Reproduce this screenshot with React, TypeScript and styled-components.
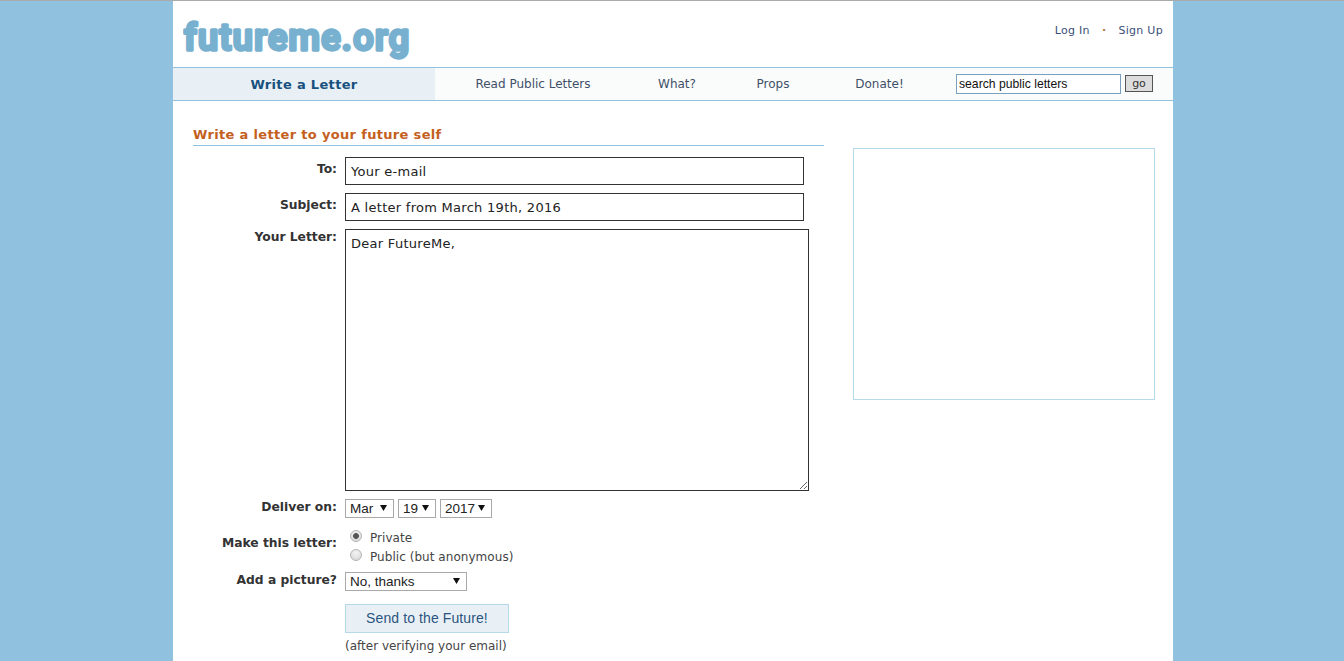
import React from "react";
import styled, { createGlobalStyle } from "styled-components";

const GlobalStyle = createGlobalStyle`
  html, body {
    margin: 0;
    padding: 0;
    height: 100%;
    overflow: hidden;
    background: #90c2df;
    font-family: "DejaVu Sans", Verdana, sans-serif;
  }
  * { box-sizing: border-box; }
`;

const arrow = `url("data:image/svg+xml,%3Csvg xmlns='http://www.w3.org/2000/svg' width='7' height='6'%3E%3Cpath d='M0 0h7L3.5 6z' fill='%23111'/%3E%3C/svg%3E")`;

const TopLine = styled.div`
  height: 1px;
  background: #aaa;
`;

const Page = styled.div`
  width: 1000px;
  height: 660px;
  margin-left: 173px;
  background: #fff;
  overflow: hidden;
`;

const Header = styled.header`
  height: 66px;
  display: flex;
  justify-content: space-between;
  padding: 0 10px;
`;

const Logo = styled.svg`
  display: block;
  width: 230px;
  height: 60px;
  font-family: Roboto, "DejaVu Sans", sans-serif;
  font-size: 36px;
  font-weight: 500;
  letter-spacing: 1.35px;
  fill: #78b1d0;
  stroke: #78b1d0;
  stroke-width: 3.4px;
  stroke-linejoin: round;
  stroke-linecap: round;
`;

const AccountLinks = styled.div`
  display: flex;
  gap: 12px;
  margin-top: 23px;
  font-size: 11px;
  line-height: 14px;
  letter-spacing: 0.3px;
  color: #3a4f78;
`;

const Dot = styled.span`
  color: #b5763a;
  font-weight: 700;
`;

const Nav = styled.nav`
  height: 34px;
  display: flex;
  align-items: center;
  border-top: 1px solid #90c2df;
  border-bottom: 1px solid #90c2df;
  background: #fafcfc;
`;

const ActiveTab = styled.a`
  width: 262px;
  height: 100%;
  display: flex;
  align-items: center;
  justify-content: center;
  background: #e8f0f6;
  color: #18507f;
  font-size: 13px;
  font-weight: 700;
  letter-spacing: 0.33px;
`;

const NavItem = styled.a<{ $width: number }>`
  width: ${(p) => p.$width}px;
  text-align: center;
  font-size: 12px;
  color: #3f5068;
`;

const SearchForm = styled.form`
  display: flex;
  align-items: center;
  gap: 4px;
  margin-left: 20px;
`;

const SearchInput = styled.input`
  width: 165px;
  height: 20px;
  padding: 0 2px;
  border: 1px solid #7a9fc0;
  border-radius: 0;
  outline: none;
  font-family: "Liberation Sans", Arial, sans-serif;
  font-size: 12.2px;
  color: #111;
`;

const GoButton = styled.button`
  width: 28px;
  height: 17px;
  margin-bottom: 1px;
  padding: 0;
  border: 1px solid #555;
  background: #ddd;
  font-family: "DejaVu Sans", sans-serif;
  font-size: 11px;
  line-height: 15px;
  color: #333;
`;

const Content = styled.div`
  display: flex;
  padding: 27px 18px 0 20px;
`;

const Main = styled.main`
  width: 631px;
`;

const Title = styled.h2`
  margin: 0 0 11px;
  height: 18px;
  border-bottom: 1px solid #90c2df;
  font-size: 13px;
  line-height: 13px;
  font-weight: 700;
  letter-spacing: 0.33px;
  color: #c4601e;
`;

const Row = styled.div<{ $gap: number }>`
  display: grid;
  grid-template-columns: 144px 1fr;
  column-gap: 8px;
  margin-bottom: ${(p) => p.$gap}px;
`;

const Label = styled.label<{ $top?: number }>`
  text-align: right;
  font-size: 12.3px;
  line-height: 16px;
  font-weight: 700;
  color: #333;
  padding-top: ${(p) => p.$top ?? 4}px;
`;

const TextField = styled.input`
  display: block;
  width: 459px;
  height: 28px;
  padding: 0 5px;
  border: 1px solid #333;
  border-radius: 0;
  outline: none;
  font-family: "DejaVu Sans", sans-serif;
  font-size: 13px;
  letter-spacing: 0.28px;
  color: #222;
`;

const LetterBox = styled.textarea`
  display: block;
  width: 464px;
  height: 262px;
  padding: 6px 5px;
  border: 1px solid #333;
  border-radius: 0;
  outline: none;
  font-family: "DejaVu Sans", sans-serif;
  font-size: 13px;
  line-height: 16px;
  letter-spacing: 0.28px;
  color: #222;
`;

const Selects = styled.div`
  display: flex;
  gap: 4px;
`;

const Select = styled.select<{ $width: number }>`
  appearance: none;
  width: ${(p) => p.$width}px;
  height: 19px;
  padding: 0 0 0 4px;
  border: 1px solid #a9a9a9;
  border-radius: 0;
  background: #fff ${arrow} no-repeat right 6px top 5px;
  font-family: "Liberation Sans", Arial, sans-serif;
  font-size: 13.5px;
  color: #222;
`;

const Radios = styled.div`
  display: flex;
  flex-direction: column;
  gap: 3px;
  padding: 4px 0 0 5px;
`;

const RadioLine = styled.label`
  display: flex;
  align-items: center;
  gap: 8px;
  height: 16px;
  font-size: 12px;
  letter-spacing: 0.05px;
  color: #444;
`;

const Radio = styled.input`
  appearance: none;
  width: 12px;
  height: 12px;
  margin: -4px 0 0;
  border: 1px solid #b5b5b5;
  border-radius: 50%;
  background: radial-gradient(circle at 50% 30%, #f4f4f4, #d4d4d4);
  &:checked {
    background: radial-gradient(circle, #555 0 2.6px, transparent 3.2px),
      radial-gradient(circle at 50% 30%, #f4f4f4, #d4d4d4);
  }
`;

const SendButton = styled.button`
  display: block;
  width: 164px;
  height: 29px;
  padding: 0 0 1px;
  border: 1px solid #b5d9e8;
  background: #e8f0f6;
  font-family: "Liberation Sans", Arial, sans-serif;
  font-size: 14px;
  letter-spacing: 0.1px;
  color: #2c5480;
`;

const Note = styled.p`
  margin: 5px 0 0;
  font-size: 12px;
  line-height: 16px;
  color: #444;
`;

const AdBox = styled.aside`
  width: 302px;
  height: 252px;
  margin: 20px 0 0 29px;
  border: 1px solid #b5d9e8;
`;

const months = ["Jan", "Feb", "Mar", "Apr", "May", "Jun", "Jul", "Aug", "Sep", "Oct", "Nov", "Dec"];

export default function App() {
  return (
    <>
      <GlobalStyle />
      <TopLine />
      <Page>
        <Header>
          <Logo viewBox="0 0 230 60">
            <text x="1" y="49">futureme.org</text>
          </Logo>
          <AccountLinks>
            <span>Log In</span>
            <Dot>·</Dot>
            <span>Sign Up</span>
          </AccountLinks>
        </Header>
        <Nav>
          <ActiveTab>Write a Letter</ActiveTab>
          <NavItem $width={196}>Read Public Letters</NavItem>
          <NavItem $width={92}>What?</NavItem>
          <NavItem $width={100}>Props</NavItem>
          <NavItem $width={113}>Donate!</NavItem>
          <SearchForm onSubmit={(e) => e.preventDefault()}>
            <SearchInput defaultValue="search public letters" />
            <GoButton>go</GoButton>
          </SearchForm>
        </Nav>
        <Content>
          <Main>
            <Title>Write a letter to your future self</Title>
            <Row $gap={8}>
              <Label>To:</Label>
              <TextField defaultValue="Your e-mail" />
            </Row>
            <Row $gap={8}>
              <Label>Subject:</Label>
              <TextField defaultValue="A letter from March 19th, 2016" />
            </Row>
            <Row $gap={8}>
              <Label $top={0}>Your Letter:</Label>
              <LetterBox defaultValue="Dear FutureMe," />
            </Row>
            <Row $gap={8}>
              <Label $top={0}>Deliver on:</Label>
              <Selects>
                <Select $width={49} defaultValue="Mar">
                  {months.map((m) => (
                    <option key={m}>{m}</option>
                  ))}
                </Select>
                <Select $width={38} defaultValue="19">
                  <option>19</option>
                </Select>
                <Select $width={52} defaultValue="2017">
                  <option>2017</option>
                </Select>
              </Selects>
            </Row>
            <Row $gap={7}>
              <Label $top={9}>Make this letter:</Label>
              <Radios>
                <RadioLine>
                  <Radio type="radio" name="visibility" defaultChecked />
                  Private
                </RadioLine>
                <RadioLine>
                  <Radio type="radio" name="visibility" />
                  Public (but anonymous)
                </RadioLine>
              </Radios>
            </Row>
            <Row $gap={13}>
              <Label $top={0}>Add a picture?</Label>
              <Selects>
                <Select $width={122} defaultValue="No, thanks">
                  <option>No, thanks</option>
                </Select>
              </Selects>
            </Row>
            <Row $gap={0}>
              <span />
              <div>
                <SendButton>Send to the Future!</SendButton>
                <Note>(after verifying your email)</Note>
              </div>
            </Row>
          </Main>
          <AdBox />
        </Content>
      </Page>
    </>
  );
}
